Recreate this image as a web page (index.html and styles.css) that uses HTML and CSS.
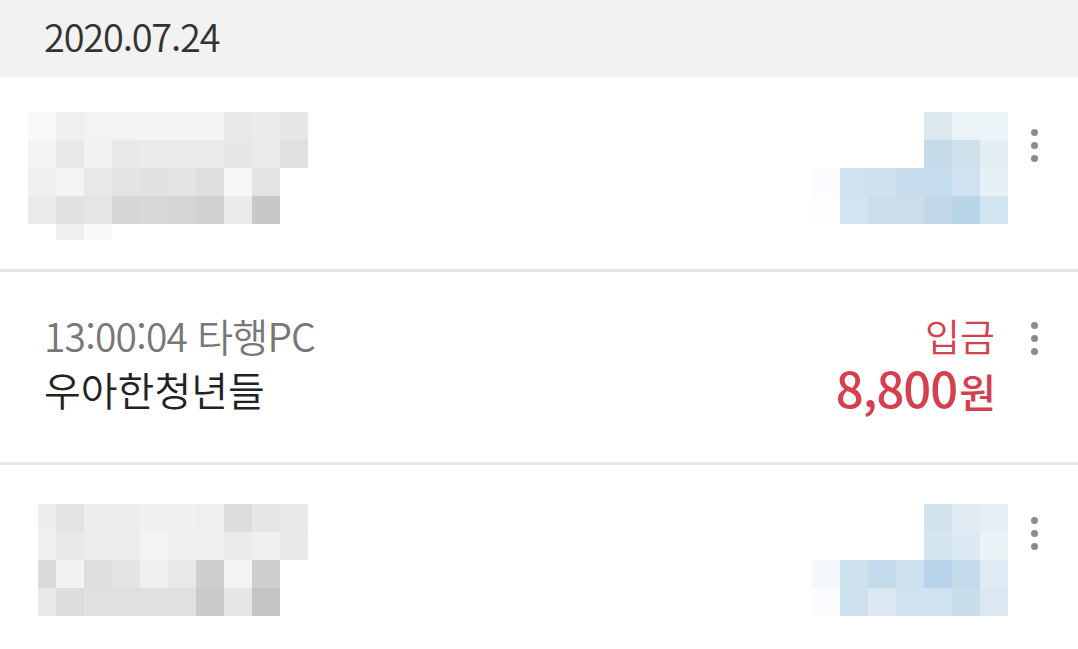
FILE: index.html
```html
<!DOCTYPE html>
<html lang="ko">
  <head>
    <meta charset="UTF-8" />
    <meta name="viewport" content="width=device-width, initial-scale=1.0" />
    <title>거래내역</title>
    <link rel="stylesheet" href="styles.css">
  </head>
  <body>
    <div class="date-bar">2020.07.24</div>
    <ul class="list">
      <li class="item item-first">
        <div class="mosaic mosaic-gray" data-set="g1"></div>
        <div class="mosaic mosaic-blue" data-set="b1"></div>
        <button class="more"><i></i><i></i><i></i></button>
      </li>
      <li class="item item-deal">
        <div class="info">
          <p class="time">13:00:04 타행PC</p>
          <p class="name">우아한청년들</p>
        </div>
        <div class="money">
          <p class="kind">입금</p>
          <p class="amount">8,800<span class="won">원</span></p>
        </div>
        <button class="more"><i></i><i></i><i></i></button>
      </li>
      <li class="item item-last">
        <div class="mosaic mosaic-gray" data-set="g3"></div>
        <div class="mosaic mosaic-blue" data-set="b3"></div>
        <button class="more"><i></i><i></i><i></i></button>
      </li>
    </ul>

    <script>
      // 가려진 항목 모자이크 색상
      const sets = {
        g1: [
          ["f9f9f9", "efefef", "f3f3f3", "f3f3f3", "f4f4f4", "f4f4f4", "f5f5f5", "e9e9e9", "ebebeb", "e7e7e7"],
          ["f3f3f3", "e8e8e8", "f1f1f1", "e8e8e8", "ebebeb", "ebebeb", "ebebeb", "e7e7e7", "eaeaea", "e0e0e0"],
          ["efefef", "f5f5f5", "e8e8e8", "e3e3e3", "e2e2e2", "e4e4e4", "dfdfdf", "f6f6f6", "e3e3e3", "fff"],
          ["eaeaea", "e2e2e2", "e5e5e5", "d5d5d5", "d8d8d8", "d5d5d5", "d1d1d1", "ebebeb", "c8c8c8", "fff"],
          ["fff", "f0f0f0", "fafafa", "fff", "fff", "fff", "fff", "fff", "fff", "fff"],
        ],
        b1: [
          ["fff", "fff", "fff", "fff", "dde9f1", "ebf3f7", "edf4f8"],
          ["fff", "fff", "fff", "fff", "c6dbea", "cfe0eb", "e2edf5"],
          ["fafcfd", "d0e1ef", "cfe0ee", "c6dbeb", "c6dbeb", "d0e2ef", "e6f0f7"],
          ["fdfdfd", "d3e4f1", "c9ddeb", "c9ddeb", "c3d7ea", "b9d5e8", "d3e4f1"],
        ],
        g3: [
          ["eeeeee", "e3e3e3", "ececec", "ececec", "f0f0f0", "f0f0f0", "efefef", "dddddd", "e6e6e6", "e8e8e8"],
          ["f0f0f0", "e9e9e9", "ededed", "ececec", "f4f4f4", "efefef", "efefef", "ebebeb", "efefef", "e9e9e9"],
          ["dadada", "f2f2f2", "dedede", "e3e3e3", "f0f0f0", "e8e8e8", "cfcfcf", "f3f3f3", "cfcfcf", "fff"],
          ["e8e8e8", "dddddd", "e0e0e0", "e0e0e0", "e0e0e0", "e0e0e0", "c9c9c9", "e5e5e5", "c5c5c5", "fff"],
        ],
        b3: [
          ["fff", "fff", "fff", "fff", "d3e3ee", "dfeaf2", "e4eef5"],
          ["fff", "fff", "fff", "fff", "d6e6f0", "dceaf3", "eaf2f6"],
          ["f2f8fb", "cde0ee", "c4dbec", "cde0ee", "b9d4ea", "c3daeb", "dfebf4"],
          ["fafcfd", "cde0ee", "dce9f2", "d0e2ef", "d0e2ef", "c8ddeb", "dbe8f2"],
        ],
      };

      for (const box of document.querySelectorAll(".mosaic")) {
        const rows = sets[box.dataset.set];
        for (const row of rows) {
          for (const color of row) {
            const cell = document.createElement("span");
            cell.style.background = "#" + color;
            box.appendChild(cell);
          }
        }
      }
    </script>
  </body>
</html>
```

FILE: styles.css
```css
* {
  box-sizing: border-box;
}
body {
  margin: 0;
  background: #fff;
  font-family: "Noto Sans CJK KR", "Noto Sans", sans-serif;
  color: #222;
}
p {
  margin: 0;
}
.date-bar {
  height: 77px;
  padding: 12px 0 0 44px;
  background: #f2f2f2;
  font-size: 38px;
  font-weight: 350;
  line-height: 48px;
  color: #333;
  letter-spacing: -1.2px;
}
.list {
  margin: 0;
  padding: 0;
  list-style: none;
}
.item {
  display: flex;
  align-items: flex-start;
  padding: 0 32px 0 28px;
  border-bottom: 3px solid #e6e6e6;
}
.item-first {
  height: 195px;
  padding-top: 35px;
}
.item-deal {
  height: 193px;
  padding-top: 39px;
}
.item-last {
  height: 200px;
  padding-top: 39px;
  padding-left: 38px;
  border-bottom: none;
}

.mosaic {
  display: grid;
  grid-auto-rows: 28px;
}
.mosaic-gray {
  grid-template-columns: repeat(10, 28px);
}
.mosaic-blue {
  grid-template-columns: repeat(7, 28px);
  margin-left: auto;
  margin-right: 14px;
}
.item-first .mosaic-gray span:nth-child(n + 41) {
  height: 16px;
}
.item-last .mosaic-gray {
  grid-template-columns: 18px repeat(9, 28px);
}

.info {
  margin-left: 16px;
}
.time {
  font-size: 39px;
  font-weight: 350;
  line-height: 48px;
  color: #777;
  letter-spacing: -0.8px;
}
.name {
  margin-top: 6px;
  font-size: 40px;
  font-weight: 350;
  line-height: 48px;
  color: #222;
}
.money {
  margin-left: auto;
  margin-right: 27px;
  text-align: right;
  color: #d63f4e;
}
.kind {
  font-size: 38px;
  font-weight: 350;
  line-height: 48px;
}
.amount {
  margin-top: 2px;
  font-size: 49px;
  line-height: 52px;
  font-weight: 500;
  letter-spacing: -1px;
}
.won {
  font-size: 40px;
  margin-left: 2px;
}

.more {
  display: flex;
  flex-direction: column;
  align-items: center;
  gap: 6px;
  width: 24px;
  padding: 0;
  border: none;
  background: none;
}
.item-deal .more {
  margin-top: 11px;
}
.item-first .more {
  margin-top: 17px;
}
.item-last .more {
  margin-top: 13px;
}
.more i {
  width: 7px;
  height: 7px;
  border-radius: 50%;
  background: #8c8c8c;
}
```
